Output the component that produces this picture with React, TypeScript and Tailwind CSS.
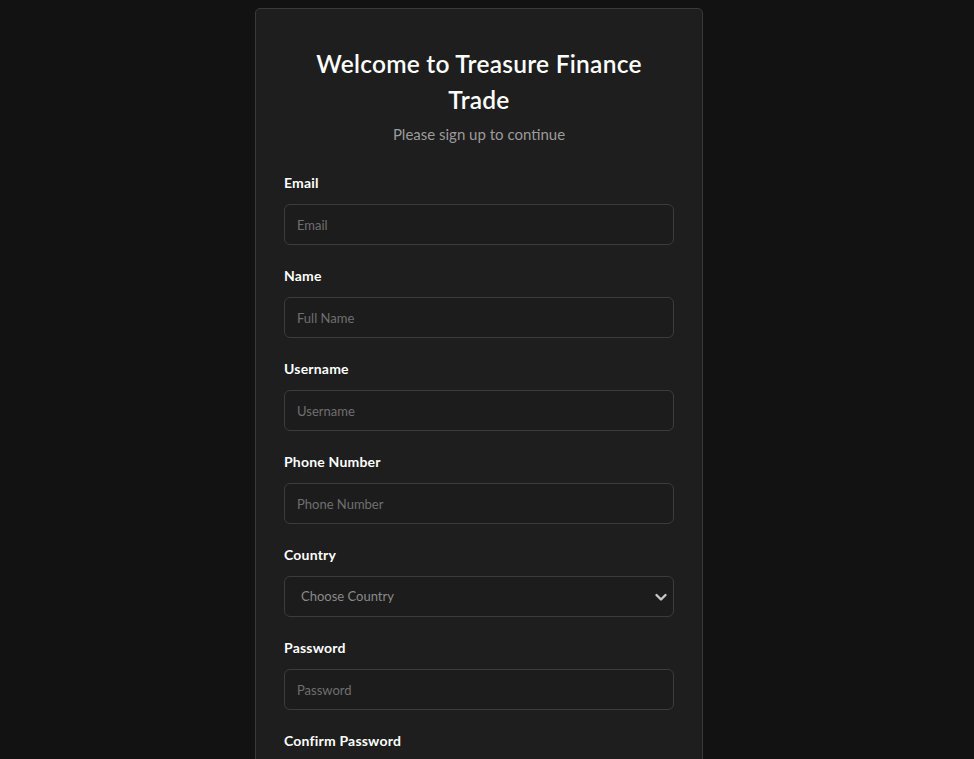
import React from "react";

const fields: { label: string; placeholder: string; type: string }[] = [
  { label: "Email", placeholder: "Email", type: "email" },
  { label: "Name", placeholder: "Full Name", type: "text" },
  { label: "Username", placeholder: "Username", type: "text" },
  { label: "Phone Number", placeholder: "Phone Number", type: "tel" },
];

function Field({ label, placeholder, type }: { label: string; placeholder: string; type: string }) {
  return (
    <div className="mb-[21px]">
      <label className="mb-[11px] block text-[14px] font-bold leading-5 tracking-[0.2px] text-white">{label}</label>
      <input
        type={type}
        placeholder={placeholder}
        className="block h-[41px] w-full rounded-[6px] border border-[#3c3c3c] bg-[#1c1c1c] px-3 text-[13px] text-white placeholder:text-[#6f6f6f] outline-none"
      />
    </div>
  );
}

export default function App() {
  return (
    <div className="min-h-screen w-full bg-[#121212] font-['Lato',sans-serif]">
      <div className="flex justify-center pt-2 pr-4">
        <div className="w-[448px] rounded-[5px] border border-[#3a3a3a] bg-[#1e1e1e] px-[28px] pt-[37px] pb-10">
          <h1 className="text-center text-[24.5px] font-semibold leading-9 tracking-[0.25px] text-white">
            Welcome to Treasure Finance
            <br />
            Trade
          </h1>
          <p className="mt-1 text-center text-[15px] leading-6 text-[#9b9b9b]">Please sign up to continue</p>
          <div className="mt-[27px]">
            {fields.map((f) => (
              <Field key={f.label} {...f} />
            ))}
            <div className="mb-[21px]">
              <label className="mb-[11px] block text-[14px] font-bold leading-5 tracking-[0.2px] text-white">Country</label>
              <div className="relative">
                <select className="block h-[41px] w-full appearance-none rounded-[6px] border border-[#3c3c3c] bg-[#1c1c1c] pl-4 pr-10 text-[13px] text-[#8a8a8a] outline-none">
                  <option>Choose Country</option>
                </select>
                <svg
                  className="pointer-events-none absolute right-[5px] top-1/2 -translate-y-1/2"
                  width="16"
                  height="16"
                  viewBox="0 0 16 16"
                  fill="none"
                  stroke="#c8c8c8"
                  strokeWidth="2.4"
                  strokeLinecap="round"
                  strokeLinejoin="round"
                >
                  <path d="M3.5 6l4.5 4.5L12.5 6" />
                </svg>
              </div>
            </div>
            <Field label="Password" placeholder="Password" type="password" />
            <Field label="Confirm Password" placeholder="Confirm Password" type="password" />
          </div>
        </div>
      </div>
    </div>
  );
}
